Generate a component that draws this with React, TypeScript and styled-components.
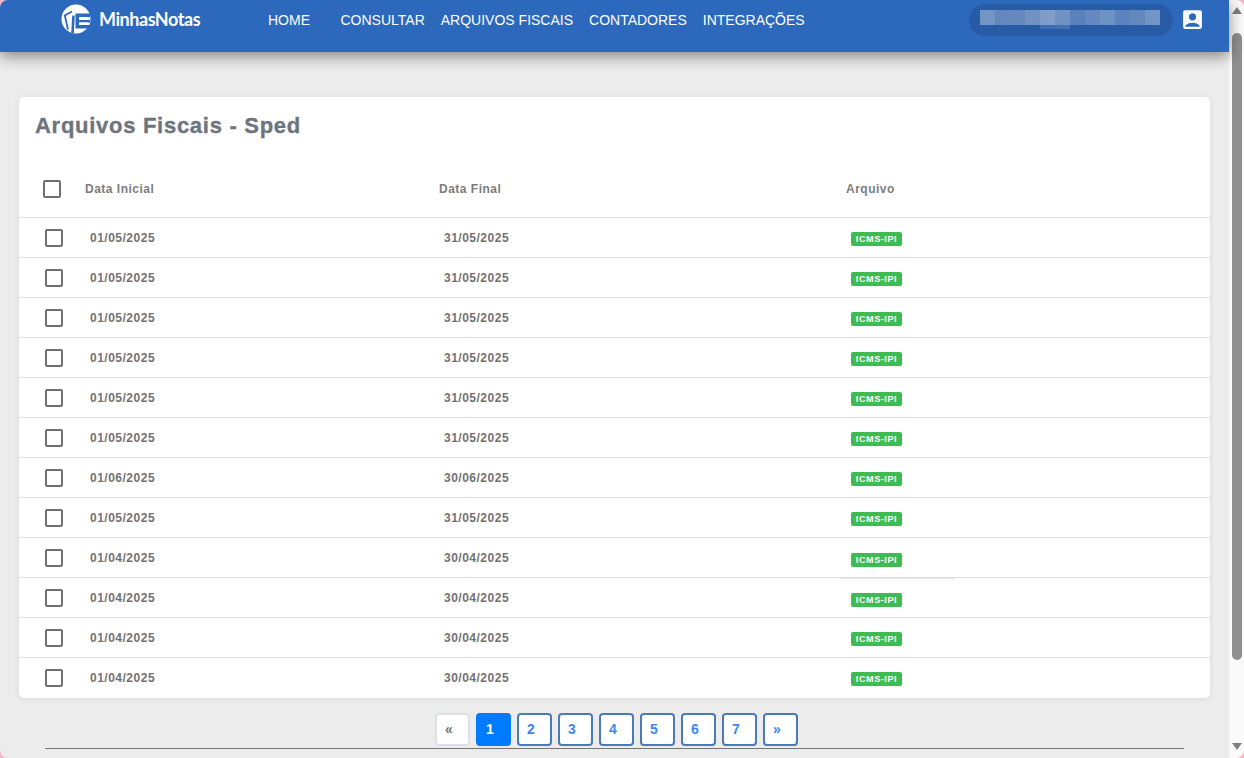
import React from "react";
import styled, { createGlobalStyle } from "styled-components";
import { MdAccountBox } from "react-icons/md";

const GlobalStyle = createGlobalStyle`
  html, body {
    margin: 0;
    height: 100%;
    overflow: hidden;
    background: #f5b5c9;
    font-family: "Liberation Sans", Arial, sans-serif;
  }
`;

const Frame = styled.div`
  display: flex;
  width: 1244px;
  height: 758px;
  border-radius: 8px;
  overflow: hidden;
`;

const Page = styled.div`
  flex: 1;
  min-width: 0;
  display: flex;
  flex-direction: column;
  background: #ececec;
`;

const Header = styled.header`
  flex: none;
  height: 52px;
  display: flex;
  align-items: flex-start;
  padding: 4px 24px 0 61px;
  box-sizing: border-box;
  background: #2c68bc;
  box-shadow: 0 4px 14px rgba(0, 0, 0, 0.45);
  position: relative;
`;

const Brand = styled.div`
  display: flex;
  align-items: center;
  gap: 8px;
  width: 207px;
  height: 32px;
`;

const LogoMark = styled.svg`
  display: block;
  flex: none;
  width: 30px;
  height: 30px;
  margin-top: -2px;
`;

const BrandName = styled.span`
  font-family: Lato, sans-serif;
  font-size: 18px;
  font-weight: 700;
  letter-spacing: -0.45px;
  color: #fff;
  margin-top: -3px;
`;

const Nav = styled.nav`
  display: flex;
  gap: 16px;
  height: 32px;
  align-items: center;
`;

const NavLink = styled.a<{ $wide?: boolean }>`
  font-size: 14px;
  color: #fff;
  white-space: nowrap;
  margin-right: ${({ $wide }) => ($wide ? "14.5px" : "0")};
`;

const UserArea = styled.div`
  margin-left: auto;
  display: flex;
  align-items: center;
  gap: 7px;
  height: 32px;
`;

const UserPill = styled.div`
  width: 204px;
  height: 32px;
  box-sizing: border-box;
  padding: 6px 0 0 11px;
  border-radius: 16px;
  background: #275ba6;
`;

const BlurGrid = styled.div`
  display: grid;
  grid-template-columns: repeat(12, 15px);
  grid-template-rows: 15px 4px;
`;

const BlurCell = styled.span<{ $shade: string }>`
  background: ${({ $shade }) => $shade};
`;

const UserIcon = styled(MdAccountBox)`
  display: block;
  width: 25px;
  height: 25px;
  color: #fff;
  margin-top: -2px;
`;

const Content = styled.main`
  flex: 1;
  min-height: 0;
  padding: 45px 19px 0;
  display: flex;
  flex-direction: column;
`;

const Card = styled.section`
  flex: none;
  width: 1191px;
  height: 601px;
  box-sizing: border-box;
  background: #fff;
  border-radius: 5px;
  box-shadow: 0 1px 6px rgba(0, 0, 0, 0.08);
`;

const Title = styled.h1`
  margin: 0;
  height: 64px;
  padding: 16px 0 0 16px;
  box-sizing: border-box;
  font-size: 22px;
  line-height: 26px;
  font-weight: 700;
  letter-spacing: 0.72px;
  -webkit-text-stroke: 0.35px #6c757d;
  color: #6c757d;
`;

const HeadRow = styled.div`
  display: grid;
  grid-template-columns: 66px 354px 407px 1fr;
  align-items: center;
  height: 57px;
  box-sizing: border-box;
  padding-bottom: 1px;
  border-bottom: 1px solid #dedede;
`;

const HeadCell = styled.div`
  font-size: 12px;
  font-weight: 700;
  letter-spacing: 0.5px;
  color: #7d7d7d;
`;

const Row = styled.div`
  display: grid;
  grid-template-columns: 66px 354px 407px 1fr;
  align-items: center;
  height: 40px;
  box-sizing: border-box;
  border-bottom: 1px solid #dedede;

  &:last-child {
    border-bottom-color: transparent;
  }
`;

const Check = styled.span<{ $head?: boolean }>`
  display: block;
  width: 18px;
  height: 18px;
  box-sizing: border-box;
  margin-left: ${({ $head }) => ($head ? "24px" : "26px")};
  border: 2px solid #707070;
  border-radius: 2px;
  background: #fff;
`;

const DateCell = styled.div`
  padding-left: 5px;
  font-size: 12px;
  font-weight: 700;
  letter-spacing: 0.5px;
  color: #757170;
`;

const FileCell = styled.div<{ $overhang?: boolean }>`
  padding-left: 5px;
  position: relative;
  height: 100%;
  display: flex;
  align-items: center;

  &::after {
    content: "";
    display: ${({ $overhang }) => ($overhang ? "block" : "none")};
    position: absolute;
    left: -6px;
    bottom: -2px;
    width: 115px;
    height: 1px;
    background: #e4e4e4;
  }
`;

const Badge = styled.span<{ $low?: boolean }>`
  display: block;
  width: 51px;
  height: 14px;
  margin-top: ${({ $low }) => ($low ? "5px" : "3px")};
  border-radius: 2px;
  background: #3fbb54;
  color: #fff;
  font-size: 9px;
  font-weight: 700;
  line-height: 14px;
  letter-spacing: 0.6px;
  text-align: center;
`;

const Pager = styled.nav`
  flex: none;
  display: flex;
  justify-content: center;
  gap: 6px;
  margin: 15px 0 0 26px;
  padding-right: 22px;
`;

const PageButton = styled.a<{ $state?: "active" | "muted" }>`
  display: block;
  width: 35px;
  height: 33px;
  box-sizing: border-box;
  padding-left: 8px;
  border-radius: 4px;
  border: 2px solid
    ${({ $state }) =>
      $state === "active" ? "#007bff" : $state === "muted" ? "#dee2e6" : "#4a7ab8"};
  background: ${({ $state }) => ($state === "active" ? "#007bff" : "#fff")};
  color: ${({ $state }) =>
    $state === "active" ? "#fff" : $state === "muted" ? "#757575" : "#3f86ee"};
  font-size: 14px;
  font-weight: 700;
  line-height: 29px;
`;

const FooterRule = styled.hr`
  flex: none;
  width: 1139px;
  height: 1px;
  margin: 2px 0 0 26px;
  border: 0;
  background: #777;
`;

const ScrollTrack = styled.div`
  flex: none;
  width: 15px;
  display: flex;
  flex-direction: column;
  align-items: center;
  background: #fafafa;
`;

const ScrollArrow = styled.svg<{ $gap: number }>`
  display: block;
  width: 10px;
  height: 7px;
  margin-top: ${({ $gap }) => $gap}px;
  fill: #7f7f7f;
`;

const ScrollThumb = styled.div`
  width: 10px;
  height: 627px;
  margin-top: 19px;
  border-radius: 5px;
  background: #8f8f8f;
`;

const blurTop = [
  "#7295c6", "#6488bd", "#6689bd", "#7093c4", "#809dca", "#7193c4",
  "#5b81bb", "#6488bf", "#6f92c4", "#5c83bd", "#6388bd", "#7395c6",
];

const blurBottom = [
  "transparent", "transparent", "transparent", "transparent", "#3e6eb1", "#4272b3",
  "transparent", "transparent", "transparent", "transparent", "transparent", "transparent",
];

const rows = [
  ["01/05/2025", "31/05/2025"],
  ["01/05/2025", "31/05/2025"],
  ["01/05/2025", "31/05/2025"],
  ["01/05/2025", "31/05/2025"],
  ["01/05/2025", "31/05/2025"],
  ["01/05/2025", "31/05/2025"],
  ["01/06/2025", "30/06/2025"],
  ["01/05/2025", "31/05/2025"],
  ["01/04/2025", "30/04/2025"],
  ["01/04/2025", "30/04/2025"],
  ["01/04/2025", "30/04/2025"],
  ["01/04/2025", "30/04/2025"],
];

const Logo = () => (
  <LogoMark viewBox="0 0 30 30" aria-hidden="true">
    <circle cx="15" cy="15" r="14.5" fill="#fff" />
    <path d="M11 7.5 L3.8 11.5 L7 25.5" fill="none" stroke="#2c68bc" strokeWidth="1.8" />
    <path d="M12.5 11.5 L11.5 29" fill="none" stroke="#2c68bc" strokeWidth="2.6" />
    <path
      d="M14.5 9.5 H29 V13 H18 V16 H29 V18.5 H18 V21 H29 V24.5 H14.5 Z"
      fill="#2c68bc"
    />
    <path d="M18 13 H26.5 V16 H18 Z M18 18.5 H26.5 V21 H18 Z" fill="#fff" />
  </LogoMark>
);

export default function App() {
  return (
    <Frame>
      <GlobalStyle />
      <Page>
        <Header>
          <Brand>
            <Logo />
            <BrandName>MinhasNotas</BrandName>
          </Brand>
          <Nav>
            <NavLink $wide>HOME</NavLink>
            <NavLink>CONSULTAR</NavLink>
            <NavLink>ARQUIVOS FISCAIS</NavLink>
            <NavLink>CONTADORES</NavLink>
            <NavLink>INTEGRAÇÕES</NavLink>
          </Nav>
          <UserArea>
            <UserPill>
              <BlurGrid>
                {blurTop.concat(blurBottom).map((shade, i) => (
                  <BlurCell key={i} $shade={shade} />
                ))}
              </BlurGrid>
            </UserPill>
            <UserIcon />
          </UserArea>
        </Header>
        <Content>
          <Card>
            <Title>Arquivos Fiscais - Sped</Title>
            <HeadRow>
              <Check $head />
              <HeadCell>Data Inicial</HeadCell>
              <HeadCell>Data Final</HeadCell>
              <HeadCell>Arquivo</HeadCell>
            </HeadRow>
            {rows.map(([start, end], i) => (
              <Row key={i}>
                <Check />
                <DateCell>{start}</DateCell>
                <DateCell>{end}</DateCell>
                <FileCell $overhang={i === 8}>
                  <Badge $low={i === 8 || i === 9}>ICMS-IPI</Badge>
                </FileCell>
              </Row>
            ))}
          </Card>
          <Pager>
            <PageButton $state="muted">«</PageButton>
            <PageButton $state="active">1</PageButton>
            <PageButton>2</PageButton>
            <PageButton>3</PageButton>
            <PageButton>4</PageButton>
            <PageButton>5</PageButton>
            <PageButton>6</PageButton>
            <PageButton>7</PageButton>
            <PageButton>»</PageButton>
          </Pager>
          <FooterRule />
        </Content>
      </Page>
      <ScrollTrack>
        <ScrollArrow $gap={7} viewBox="0 0 10 7">
          <path d="M5 0 L10 7 H0 Z" />
        </ScrollArrow>
        <ScrollThumb />
        <ScrollArrow $gap={83} viewBox="0 0 10 7">
          <path d="M0 0 H10 L5 7 Z" />
        </ScrollArrow>
      </ScrollTrack>
    </Frame>
  );
}
